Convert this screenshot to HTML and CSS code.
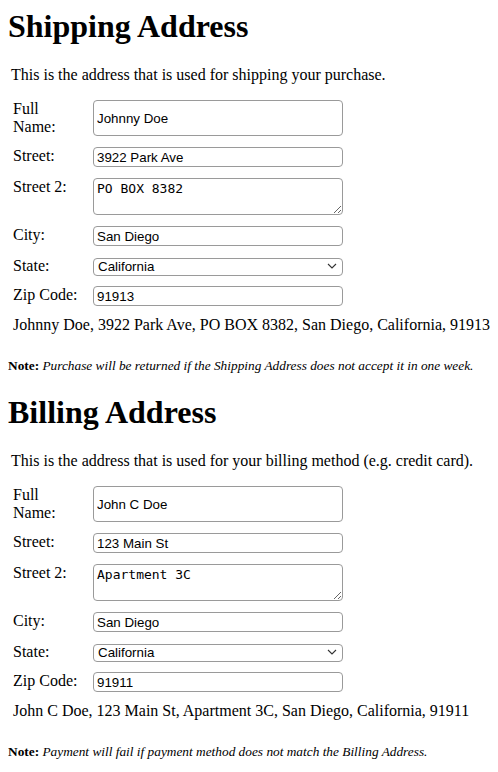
FILE: index.html
```html
<!DOCTYPE html>
<html lang="en">
<head>
<meta charset="utf-8">
<title>Addresses</title>
<link rel="stylesheet" href="styles.css">
</head>
<body>
<section class="address">
  <h1 class="title">Shipping Address</h1>
  <p class="intro">This is the address that is used for shipping your purchase.</p>
  <form class="fields">
    <label class="label" for="s-name">Full Name:</label>
    <input class="field field-tall" id="s-name" type="text" value="Johnny Doe">
    <label class="label" for="s-street">Street:</label>
    <input class="field" id="s-street" type="text" value="3922 Park Ave">
    <label class="label" for="s-street2">Street 2:</label>
    <textarea class="field area" id="s-street2">PO BOX 8382</textarea>
    <label class="label" for="s-city">City:</label>
    <input class="field" id="s-city" type="text" value="San Diego">
    <label class="label" for="s-state">State:</label>
    <div class="select-wrap">
      <select class="field select" id="s-state"><option>California</option></select>
      <svg class="chevron" width="10" height="6" viewBox="0 0 10 6"><path d="M1 1l4 4 4-4" fill="none" stroke="#333" stroke-width="1.1"/></svg>
    </div>
    <label class="label" for="s-zip">Zip Code:</label>
    <input class="field" id="s-zip" type="text" value="91913">
  </form>
  <p class="summary">Johnny Doe, 3922 Park Ave, PO BOX 8382, San Diego, California, 91913</p>
  <p class="note"><b>Note:</b> <i>Purchase will be returned if the Shipping Address does not accept it in one week.</i></p>
</section>
<section class="address">
  <h1 class="title">Billing Address</h1>
  <p class="intro">This is the address that is used for your billing method (e.g. credit card).</p>
  <form class="fields">
    <label class="label" for="b-name">Full Name:</label>
    <input class="field field-tall" id="b-name" type="text" value="John C Doe">
    <label class="label" for="b-street">Street:</label>
    <input class="field" id="b-street" type="text" value="123 Main St">
    <label class="label" for="b-street2">Street 2:</label>
    <textarea class="field area" id="b-street2">Apartment 3C</textarea>
    <label class="label" for="b-city">City:</label>
    <input class="field" id="b-city" type="text" value="San Diego">
    <label class="label" for="b-state">State:</label>
    <div class="select-wrap">
      <select class="field select" id="b-state"><option>California</option></select>
      <svg class="chevron" width="10" height="6" viewBox="0 0 10 6"><path d="M1 1l4 4 4-4" fill="none" stroke="#333" stroke-width="1.1"/></svg>
    </div>
    <label class="label" for="b-zip">Zip Code:</label>
    <input class="field" id="b-zip" type="text" value="91911">
  </form>
  <p class="summary">John C Doe, 123 Main St, Apartment 3C, San Diego, California, 91911</p>
  <p class="note"><b>Note:</b> <i>Payment will fail if payment method does not match the Billing Address.</i></p>
</section>
</body>
</html>
```
FILE: styles.css
```css
html, body {
  background: #fff;
}
body {
  margin: 8px;
  font-family: "Liberation Serif", "Times New Roman", serif;
  font-size: 16px;
  color: #000;
}
.title {
  margin: 0 0 21px;
  font-size: 32px;
  font-weight: bold;
  line-height: 37px;
}
.intro {
  margin: 0 0 16px;
  padding-left: 3px;
  line-height: 18px;
}
.fields {
  display: grid;
  grid-template-columns: 68px 250px;
  column-gap: 12px;
  row-gap: 11px;
  align-items: start;
  padding-left: 5px;
  margin: 0;
}
.label {
  line-height: 18px;
}
.field {
  box-sizing: border-box;
  width: 250px;
  height: 20px;
  margin: 0;
  padding: 0 3px;
  border: 1px solid #9a9a9a;
  border-radius: 4px;
  background: #fff;
  color: #000;
  font-family: "Liberation Sans", Arial, sans-serif;
  font-size: 13.33px;
}
.field-tall {
  height: 36px;
}
.area {
  height: 37px;
  padding: 2px 3px;
  font-family: "DejaVu Sans Mono", "Liberation Mono", monospace;
  font-size: 13px;
  line-height: 16px;
  resize: both;
}
.select-wrap {
  position: relative;
  width: 250px;
  height: 18px;
}
.select {
  appearance: none;
  -webkit-appearance: none;
  height: 18px;
  padding: 0 4px;
  line-height: 16px;
}
.chevron {
  position: absolute;
  right: 6px;
  top: 6px;
  pointer-events: none;
}
.summary {
  margin: 10px 0 24px;
  padding-left: 5px;
  line-height: 18px;
}
.note {
  margin: 0 0 21px;
  font-size: 13.33px;
  line-height: 15px;
}
```
